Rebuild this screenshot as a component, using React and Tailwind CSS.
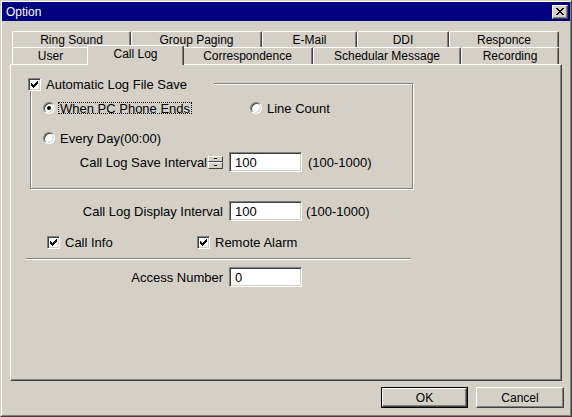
import React from "react";

const F = "font-['Liberation_Sans',Arial,sans-serif]";

function Check() {
  const cols = [
    [3, 5], [4, 6], [5, 7], [6, 6], [7, 5], [8, 4], [9, 3],
  ];
  return (
    <span className="relative block w-[13px] h-[13px] shrink-0 bg-white border border-t-[#808080] border-l-[#808080] border-r-white border-b-white shadow-[inset_1px_1px_0_#404040,inset_-1px_-1px_0_#d4d0c8]">
      <svg className="absolute left-[-1px] top-[-1px]" width="13" height="13" viewBox="0 0 13 13" shapeRendering="crispEdges">
        {cols.map(([x, y]) => (
          <rect key={x} x={x} y={y} width="1" height="3" fill="#000" />
        ))}
      </svg>
    </span>
  );
}

function Radio({ on }) {
  return (
    <span className="relative flex items-center justify-center w-[12px] h-[12px] shrink-0 rounded-full bg-white border border-t-[#808080] border-l-[#808080] border-r-white border-b-white shadow-[inset_1px_1px_0_#404040,inset_-1px_-1px_0_#d4d0c8]">
      {on && <span className="block w-[4px] h-[4px] rounded-full bg-black" />}
    </span>
  );
}

function Field({ value }) {
  return (
    <div className="w-[73px] h-[20px] shrink-0 bg-white border border-t-[#808080] border-l-[#808080] border-r-white border-b-white shadow-[inset_1px_1px_0_#404040,inset_-1px_-1px_0_#d4d0c8] flex items-center pl-[5px] text-[13px] leading-none">
      {value}
    </div>
  );
}

function Spin() {
  const part =
    "w-[15px] bg-[#d4d0c8] border border-t-white border-l-white border-r-[#404040] border-b-[#404040] flex items-center justify-center";
  return (
    <div className="flex flex-col w-[15px] h-[13px] shrink-0">
      <div className={part + " h-[6px]"}>
        <span className="block w-[3px] h-[1px] bg-black" />
      </div>
      <div className={part + " h-[7px]"}>
        <span className="block w-[3px] h-[1px] bg-black" />
      </div>
    </div>
  );
}

const tabBase =
  "h-full shrink-0 bg-[#d4d0c8] border-l border-t border-r border-l-white border-t-white border-r-[#404040] shadow-[inset_-1px_0_0_#808080] rounded-t-[2px] flex items-center justify-center text-[12px] leading-none";

function Tab({ w, label }) {
  return (
    <div className={tabBase} style={{ width: w }}>
      {label}
    </div>
  );
}

export default function App() {
  return (
    <div className={`${F} w-[572px] h-[417px] bg-[#d4d0c8] text-black border border-t-[#d4d0c8] border-l-[#d4d0c8] border-r-[#404040] border-b-[#404040]`}>
      <div className="h-full flex flex-col border border-t-white border-l-white border-r-[#808080] border-b-[#808080]">
        {/* title bar */}
        <div className="h-[19px] shrink-0 bg-[#000080] flex items-center justify-between">
          <span className="pl-[4px] text-white text-[12px] leading-none">Option</span>
          <div className="mr-[2px] w-[16px] h-[14px] bg-[#d4d0c8] border border-t-white border-l-white border-r-[#404040] border-b-[#404040] shadow-[inset_-1px_-1px_0_#808080] flex items-center justify-center">
            <svg width="8" height="7" viewBox="0 0 8 7" shapeRendering="crispEdges">
              <path d="M0 0h2v1h-2zM6 0h2v1h-2zM1 1h2v1h-2zM5 1h2v1h-2zM2 2h4v1h-4zM3 3h2v1h-2zM2 4h4v1h-4zM1 5h2v1h-2zM5 5h2v1h-2zM0 6h2v1h-2zM6 6h2v1h-2z" fill="#000" />
            </svg>
          </div>
        </div>

        {/* tabs row 1 */}
        <div className="mt-[10px] ml-[10px] h-[16px] flex">
          <Tab w={119} label="Ring Sound" />
          <Tab w={131} label="Group Paging" />
          <Tab w={95} label="E-Mail" />
          <Tab w={92} label="DDI" />
          <Tab w={110} label="Responce" />
        </div>
        {/* tabs row 2 */}
        <div className="ml-[10px] h-[17px] flex items-start">
          <Tab w={77} label="User" />
          <div className={tabBase + " relative z-10 -mt-[2px] -mx-[2px] !h-[20px] pb-[4px]"} style={{ width: 97 }}>
            Call Log
          </div>
          <Tab w={131} label="Correspondence" />
          <Tab w={148} label="Schedular Message" />
          <Tab w={98} label="Recording" />
        </div>

        {/* panel */}
        <div className="ml-[8px] w-[552px] h-[317px] shrink-0 border border-t-white border-l-white border-r-[#404040] border-b-[#404040] shadow-[inset_-1px_-1px_0_#808080] flex flex-col text-[13px] leading-none">
          {/* group box */}
          <div className="relative ml-[19px] mt-[18px] w-[383px] h-[106px] shrink-0 border border-[#808080] shadow-[inset_1px_1px_0_#fff,1px_1px_0_#fff] pl-[12px] pt-[17px] flex flex-col">
            <div className="absolute left-[-3px] top-[-6px] w-[186px] h-[13px] bg-[#d4d0c8] flex items-center gap-[5px]">
              <Check />
              <span>Automatic Log File Save</span>
            </div>
            <div className="h-[14px] flex items-center">
              <div className="w-[207px] flex items-center">
                <Radio on />
                <span className="ml-[3px] border border-dotted border-black px-[1px] h-[12px] flex items-center">When PC Phone Ends</span>
              </div>
              <Radio />
              <span className="ml-[5px]">Line Count</span>
            </div>
            <div className="mt-[16px] h-[14px] flex items-center">
              <Radio />
              <span className="ml-[5px]">Every Day(00:00)</span>
            </div>
            <div className="mt-[7px] h-[20px] flex items-center">
              <div className="w-[180px] flex items-center justify-end gap-[1px]">
                <span>Call Log Save Interval</span>
                <Spin />
              </div>
              <div className="ml-[6px]"><Field value="100" /></div>
              <span className="ml-[6px]">(100-1000)</span>
            </div>
          </div>

          <div className="mt-[12px] h-[20px] flex items-center">
            <span className="w-[212px] text-right">Call Log Display Interval</span>
            <div className="ml-[6px]"><Field value="100" /></div>
            <span className="ml-[4px]">(100-1000)</span>
          </div>

          <div className="mt-[15px] h-[13px] pl-[36px] flex items-center">
            <div className="w-[150px] flex items-center gap-[5px]">
              <Check />
              <span>Call Info</span>
            </div>
            <Check />
            <span className="ml-[5px]">Remote Alarm</span>
          </div>

          <div className="mt-[9px] ml-[15px] w-[385px] h-[2px] border-t border-t-[#808080] border-b border-b-white" />

          <div className="mt-[7px] h-[20px] flex items-center">
            <span className="w-[212px] text-right">Access Number</span>
            <div className="ml-[6px]"><Field value="0" /></div>
          </div>
        </div>

        {/* buttons */}
        <div className="mt-[6px] pr-[6px] flex justify-end gap-[8px]">
          <div className="w-[87px] h-[21px] border border-black">
            <div className="h-full border border-t-white border-l-white border-r-[#404040] border-b-[#404040] shadow-[inset_-1px_-1px_0_#808080] flex items-center justify-center text-[12px] leading-none">
              OK
            </div>
          </div>
          <div className="w-[88px] h-[21px] border border-t-white border-l-white border-r-[#404040] border-b-[#404040] shadow-[inset_-1px_-1px_0_#808080] flex items-center justify-center text-[12px] leading-none">
            Cancel
          </div>
        </div>
      </div>
    </div>
  );
}
